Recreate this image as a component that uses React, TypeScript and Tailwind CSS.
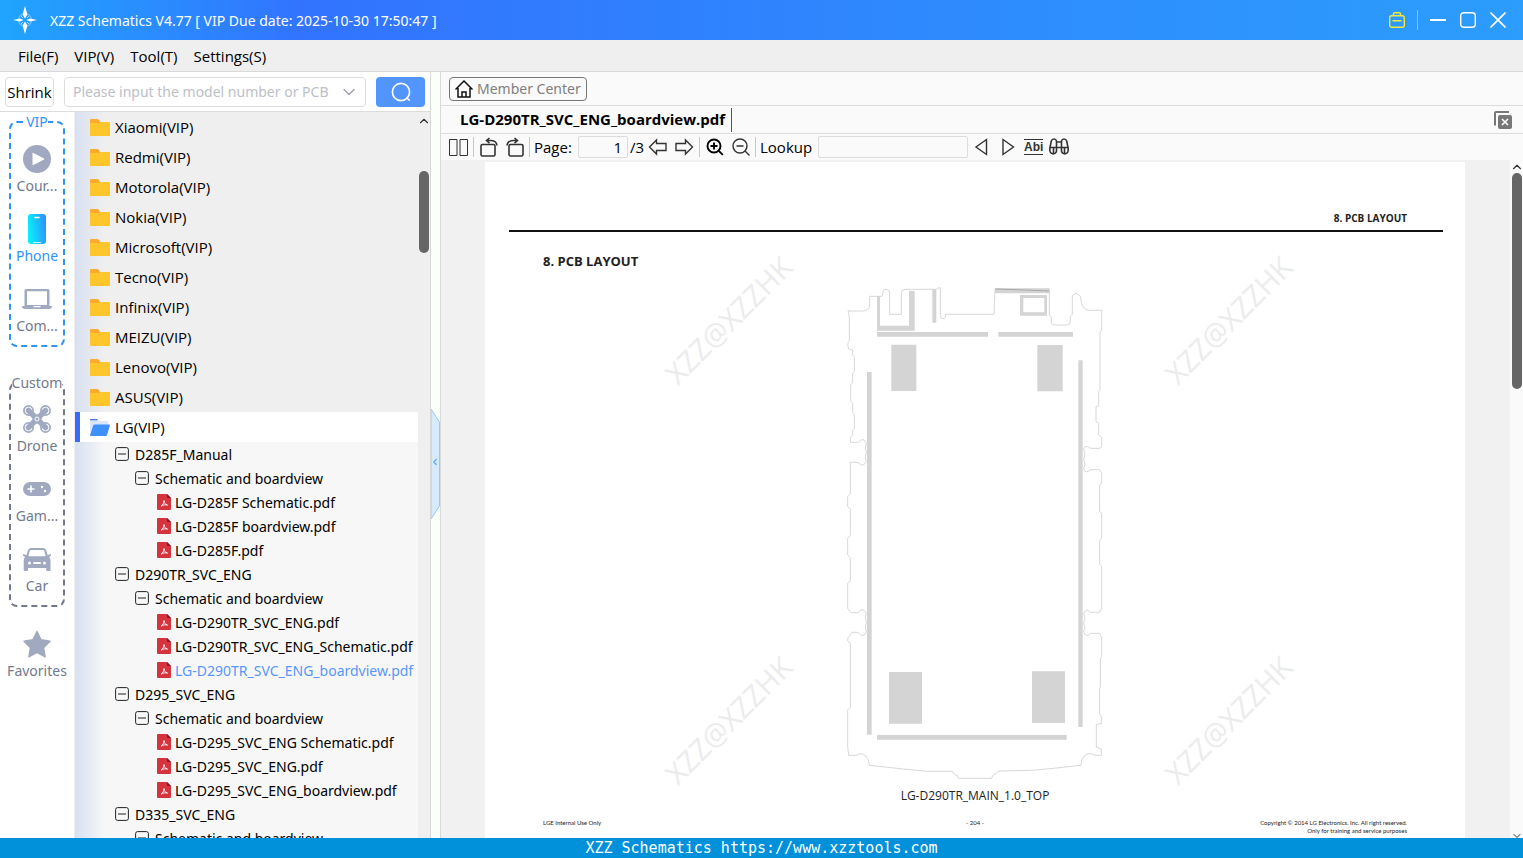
import type { ReactNode } from 'react';
import { ChevronDown, ChevronLeft, ChevronUp } from 'lucide-react';

type TreeNode = {
    label: string;
    level: 1 | 2 | 3;
    active?: boolean;
};

const brands = [
    'Xiaomi(VIP)',
    'Redmi(VIP)',
    'Motorola(VIP)',
    'Nokia(VIP)',
    'Microsoft(VIP)',
    'Tecno(VIP)',
    'Infinix(VIP)',
    'MEIZU(VIP)',
    'Lenovo(VIP)',
    'ASUS(VIP)',
];

const nodes: TreeNode[] = [
    { label: 'D285F_Manual', level: 1 },
    { label: 'Schematic and boardview', level: 2 },
    { label: 'LG-D285F Schematic.pdf', level: 3 },
    { label: 'LG-D285F boardview.pdf', level: 3 },
    { label: 'LG-D285F.pdf', level: 3 },
    { label: 'D290TR_SVC_ENG', level: 1 },
    { label: 'Schematic and boardview', level: 2 },
    { label: 'LG-D290TR_SVC_ENG.pdf', level: 3 },
    { label: 'LG-D290TR_SVC_ENG_Schematic.pdf', level: 3 },
    { label: 'LG-D290TR_SVC_ENG_boardview.pdf', level: 3, active: true },
    { label: 'D295_SVC_ENG', level: 1 },
    { label: 'Schematic and boardview', level: 2 },
    { label: 'LG-D295_SVC_ENG Schematic.pdf', level: 3 },
    { label: 'LG-D295_SVC_ENG.pdf', level: 3 },
    { label: 'LG-D295_SVC_ENG_boardview.pdf', level: 3 },
    { label: 'D335_SVC_ENG', level: 1 },
    { label: 'Schematic and boardview', level: 2 },
];

const indent = { 1: 'pl-10', 2: 'pl-[60px]', 3: 'pl-[82px]' };

/* ---------- icons ---------- */

function LogoIcon() {
    return (
        <svg className="w-6 h-7" viewBox="0 0 24 28" fill="none">
            <circle cx="12" cy="14" r="6.500" stroke="#fff" strokeOpacity=".35" strokeWidth="1.200" />
            <path d="M12 0l2.400 8.500L12 12.500 9.600 8.500zM12 28l2.400-8.500L12 15.500l-2.400 4zM0 14l7-1.600 3.500 1.600L7 15.600zM24 14l-7-1.600-3.500 1.600 3.500 1.600z" fill="#fff" />
            <path d="M8 10l2 2M16 10l-2 2M8 18l2-2M16 18l-2-2" stroke="#fff" strokeOpacity=".6" />
        </svg>
    );
}

function FolderIcon() {
    return (
        <svg className="w-5 h-[17px] shrink-0" viewBox="0 0 20 17">
            <path d="M0 1a1 1 0 011-1h7l2 2.500V8H0z" fill="#fcab2c" />
            <path d="M0 4h9.500l1-1H19a1 1 0 011 1v12a1 1 0 01-1 1H1a1 1 0 01-1-1z" fill="#fec62a" />
        </svg>
    );
}

function OpenFolderIcon() {
    return (
        <svg className="w-5 h-[17px] shrink-0" viewBox="0 0 20 17">
            <path d="M0 1a1 1 0 011-1h6l1 2h9a1 1 0 011 1v3L2 16H1a1 1 0 01-1-1z" fill="#dbe6fb" />
            <path d="M0 1a1 1 0 011-1h6l1 1.200H0z" fill="#3d72e8" />
            <path d="M4.500 5.500H19q1.200 0 .8 1.200L17 16q-.3 1-1.300 1H1Q-.2 17 .2 15.800L3.200 6.500q.3-1 1.300-1z" fill="#3d90fd" />
        </svg>
    );
}

function MinusBox() {
    return (
        <svg className="w-3.5 h-3.5 shrink-0" viewBox="0 0 14 14" fill="none" stroke="#222">
            <rect x=".6" y=".6" width="12.800" height="12.800" rx="2" />
            <path d="M3 7h8" />
        </svg>
    );
}

function PdfIcon() {
    return (
        <svg className="w-3.5 h-4 shrink-0" viewBox="0 0 14 16">
            <path d="M1 0h9l4 4v11a1 1 0 01-1 1H1a1 1 0 01-1-1V1a1 1 0 011-1z" fill="#d5343f" />
            <path d="M10 0l4 4h-3a1 1 0 01-1-1z" fill="#8f1620" />
            <path d="M4 12.200c1.600-.8 3-3.200 3-5.700 0 2.500 1.200 4 3.500 4.500-2.200-.5-4.300 0-6.500 1.200z" fill="none" stroke="#fff" strokeWidth=".9" strokeLinejoin="round" />
        </svg>
    );
}

function PlayIcon() {
    return (
        <svg className="w-7 h-7" viewBox="0 0 28 28">
            <circle cx="14" cy="14" r="14" fill="#a0a9bf" />
            <path d="M9.500 8.500q0-1 1-.5l10.500 5.400q1 .6 0 1.200L10.500 20q-1 .5-1-.5z" fill="#fff" />
        </svg>
    );
}

function PhoneIcon() {
    return (
        <svg className="w-[18px] h-[30px]" viewBox="0 0 18 30">
            <defs>
                <linearGradient id="phone-fill" x1="0" y1=".6" x2="1" y2=".4">
                    <stop offset="0" stopColor="#06f3fb" />
                    <stop offset="1" stopColor="#2f93ff" />
                </linearGradient>
            </defs>
            <rect width="18" height="30" rx="3" fill="url(#phone-fill)" />
            <path d="M7 3.500h4" stroke="#fff" strokeWidth="1.600" strokeLinecap="round" />
            <path d="M5 28.500h8" stroke="#fff" strokeWidth=".8" />
        </svg>
    );
}

function LaptopIcon() {
    return (
        <svg className="w-[30px] h-5" viewBox="0 0 30 20">
            <path d="M4 0h22a1.500 1.500 0 011.500 1.500V17h-25V1.500A1.500 1.500 0 014 0zM5 2.200V16h20V2.200z" fill="#a0a9bf" fillRule="evenodd" />
            <path d="M0 17h11l1 1.200h6l1-1.200h11q0 3-3 3H3q-3 0-3-3z" fill="#a0a9bf" />
        </svg>
    );
}

function DroneIcon() {
    return (
        <svg className="w-7 h-7" viewBox="0 0 28 28" fill="none" stroke="#a0a9bf">
            <circle cx="5.500" cy="5.500" r="4.600" strokeWidth="1.700" />
            <circle cx="22.500" cy="5.500" r="4.600" strokeWidth="1.700" />
            <circle cx="5.500" cy="22.500" r="4.600" strokeWidth="1.700" />
            <circle cx="22.500" cy="22.500" r="4.600" strokeWidth="1.700" />
            <path d="M5.500 5.500L11 11M22.500 5.500L17 11M5.500 22.500L11 17M22.500 22.500L17 17" strokeWidth="5.500" strokeLinecap="round" />
            <path d="M9.500 9q4.500 2 9 0-1 5 0 10-4.500-2-9 0 1-5 0-10z" fill="#a0a9bf" />
            <circle cx="14" cy="14" r="2" stroke="#fff" />
        </svg>
    );
}

function GameIcon() {
    return (
        <svg className="w-7 h-3.5" viewBox="0 0 28 14">
            <rect width="28" height="14" rx="7" fill="#a0a9bf" />
            <path d="M8 3.500v7M4.500 7h7" stroke="#fff" strokeWidth="1.600" />
            <circle cx="19" cy="5" r="1.200" fill="#fff" />
            <circle cx="22" cy="9" r="1.200" fill="#fff" />
        </svg>
    );
}

function CarIcon() {
    return (
        <svg className="w-7 h-[23px]" viewBox="0 0 28 23">
            <path d="M8 0h12q2.500 0 3.200 2.300l1.400 4.700L28 6v1.500l-2 1.800q1.500 1 1.500 3V22q0 1-1 1h-2.300q-1 0-1-1v-2H5v2q0 1-1 1H1.700q-1 0-1-1v-9.700q0-2 1.500-3L0 7.500V6l3.500 1L5 2.300Q5.600 0 8 0zM8 2q-1 0-1.300 1L5.300 8.300h17.400L21.300 3Q21 2 20 2z" fill="#a0a9bf" fillRule="evenodd" />
            <circle cx="6.500" cy="15" r="1.500" fill="#fff" />
            <circle cx="21.500" cy="15" r="1.500" fill="#fff" />
            <path d="M11 15h6" stroke="#fff" strokeWidth="2" strokeLinecap="round" />
        </svg>
    );
}

function StarIcon() {
    return (
        <svg className="w-7 h-7" viewBox="0 0 28 28">
            <path d="M14 1.500l4 8.300 9 1.400-6.500 6.400 1.600 9.200-8.100-4.400-8.100 4.400 1.600-9.200L1 11.200l9-1.400z" fill="#a0a9bf" stroke="#a0a9bf" strokeWidth="1.500" strokeLinejoin="round" />
        </svg>
    );
}

/* ---------- left side ---------- */

function RailItem({ icon, label, active }: { icon: ReactNode; label: string; active?: boolean }) {
    return (
        <button className={`flex w-full flex-col items-center whitespace-nowrap ${active ? 'text-[#2f93f6]' : 'text-[#717a8c]'}`}>
            <span className="flex h-8 items-center justify-center pt-0.5">{icon}</span>
            <span className="leading-6">{label}</span>
        </button>
    );
}

function Rail() {
    return (
        <nav className="flex w-[74px] shrink-0 flex-col bg-white font-['Noto_Sans',sans-serif] text-sm">
            <fieldset className="mx-[9px] flex min-w-0 flex-col gap-3.5 rounded-lg border-2 border-dashed border-[#2f93f6] pt-2.5 pb-[7px]">
                <legend className="mx-auto h-5 leading-5 text-[#2f93f6]">VIP</legend>
                <RailItem icon={<PlayIcon />} label="Cour..." />
                <RailItem icon={<PhoneIcon />} label="Phone" active />
                <RailItem icon={<LaptopIcon />} label="Com..." />
            </fieldset>
            <fieldset className="mx-[9px] mt-[26px] flex min-w-0 flex-col gap-3.5 rounded-lg border-2 border-dashed border-[#717a8c] pt-[9px] pb-[7px]">
                <legend className="mx-auto h-5 leading-5 text-[#717a8c]">Custom</legend>
                <RailItem icon={<DroneIcon />} label="Drone" />
                <RailItem icon={<GameIcon />} label="Gam..." />
                <RailItem icon={<CarIcon />} label="Car" />
            </fieldset>
            <div className="mt-5">
                <RailItem icon={<StarIcon />} label="Favorites" />
            </div>
        </nav>
    );
}

function Tree() {
    return (
        <div className="flex min-w-0 flex-1 overflow-hidden bg-[#efefef]">
            <ul className="ml-px min-w-0 flex-1 overflow-hidden bg-linear-to-r from-[#d8e0f1] to-[#efefef] to-[30px] text-black">
                {brands.map((brand) => (
                    <li key={brand} className="flex h-[30px] items-center gap-[5px] pl-[15px]">
                        <FolderIcon />
                        {brand}
                    </li>
                ))}
                <li className="flex h-[30px] items-center gap-[5px] border-l-[5px] border-[#376cfa] bg-white pl-2.5">
                    <OpenFolderIcon />
                    LG(VIP)
                </li>
                <li className="bg-linear-to-r from-[#d8e0f1] to-[#f7f7f7] to-[30px] font-['Noto_Sans',sans-serif] text-sm">
                    <ul>
                        {nodes.map((node, i) => (
                            <li
                                key={i}
                                className={`flex h-6 items-center whitespace-nowrap ${indent[node.level]} ${node.level === 3 ? 'gap-1' : 'gap-1.5'} ${node.active ? 'text-[#5797f9]' : ''}`}
                            >
                                {node.level === 3 ? <PdfIcon /> : <MinusBox />}
                                <span className="pt-0.5">{node.label}</span>
                            </li>
                        ))}
                    </ul>
                </li>
            </ul>
            <div className="flex w-3 shrink-0 flex-col items-center">
                <ChevronUp className="mt-0.5 h-3.5 w-3.5 text-[#333]" />
                <div className="mt-[43px] h-[82px] w-2.5 rounded-full bg-[#666]" />
            </div>
        </div>
    );
}

function Sidebar() {
    return (
        <aside className="flex w-[431px] shrink-0 flex-col border-r border-[#d9d9d9] bg-white">
            <div className="flex h-10 shrink-0 items-center border-b border-[#dcdcdc] px-[5px]">
                <button className="flex h-[30px] w-[49px] items-center justify-center rounded border border-[#dcdcdc] text-black">Shrink</button>
                <label className="ml-2.5 flex h-[30px] w-[302px] items-center rounded border border-[#dcdcdc]">
                    <input
                        aria-label="Model number"
                        placeholder="Please input the model number or PCB"
                        className="ml-2 w-[266px] pt-px font-['Noto_Sans',sans-serif] text-sm outline-none placeholder:text-[#bcc0c8]"
                    />
                    <ChevronDown className="h-5 w-5 text-[#9a9fa8]" strokeWidth={1.5} />
                </label>
                <button aria-label="Search" className="ml-2.5 flex h-[30px] w-[49px] items-center justify-center rounded bg-[#5295fd]">
                    <svg className="h-5 w-5" viewBox="0 0 20 20" fill="none" stroke="#fff" strokeWidth="1.600" strokeLinecap="round">
                        <circle cx="10" cy="10" r="8.600" />
                        <path d="M16 16l2.300 2.300" />
                    </svg>
                </button>
            </div>
            <div className="flex min-h-0 flex-1">
                <Rail />
                <Tree />
            </div>
        </aside>
    );
}

function Splitter() {
    return (
        <div className="flex w-[10px] shrink-0 items-center border-r border-[#d9d9d9] bg-[#fbfffa]">
            <button aria-label="Collapse sidebar" className="relative mt-[18px] h-[110px] w-[9px]">
                <svg className="h-full w-full" viewBox="0 0 9 110">
                    <path d="M0 0l8.500 13v84L0 110z" fill="#d7eafe" stroke="#96c9f7" />
                </svg>
                <ChevronLeft className="absolute top-[48px] -left-px h-2.5 w-2.5 text-[#5aaaf5]" strokeWidth={3} />
            </button>
        </div>
    );
}

/* ---------- viewer ---------- */

function Separator() {
    return <span className="h-5 w-px bg-[#c8c8c8]" />;
}

function IconButton({ label, children }: { label: string; children: ReactNode }) {
    return (
        <button aria-label={label} className="flex h-6 w-5 shrink-0 items-center justify-center text-[#333]">
            {children}
        </button>
    );
}

function Toolbar() {
    return (
        <div className="flex h-[26px] shrink-0 items-center bg-[#fafafa] pl-[7px] text-black">
            <IconButton label="Two pages">
                <svg className="h-5 w-5 shrink-0" viewBox="0 0 20 20" fill="none" stroke="currentColor">
                    <path d="M1.500 2.500h7.500v16h-7.500zM12 2.500h7.500v16h-7.500z" />
                </svg>
            </IconButton>
            <span className="mx-[5px] flex"><Separator /></span>
            <IconButton label="Rotate left">
                <svg className="h-5 w-5 shrink-0" viewBox="0 0 20 20" fill="none" stroke="currentColor" strokeWidth="1.600">
                    <rect x="2" y="7.500" width="14" height="11.500" rx="1.500" />
                    <path d="M10.500 1L7.500 3.500l3 2.700M7.500 3.500h4q6 0 6.500 5" />
                </svg>
            </IconButton>
            <span className="w-1.5" />
            <IconButton label="Rotate right">
                <svg className="h-5 w-5 shrink-0" viewBox="0 0 20 20" fill="none" stroke="currentColor" strokeWidth="1.600">
                    <rect x="4" y="7.500" width="14" height="11.500" rx="1.500" />
                    <path d="M9.500 1l3 2.500-3 2.700M12.500 3.500h-4q-6 0-6.500 5" />
                </svg>
            </IconButton>
            <span className="mx-1 flex"><Separator /></span>
            <label className="flex items-center">
                <span className="w-11">Page:</span>
                <input defaultValue="1" className="h-[22px] w-[50px] rounded-xs border border-[#dcdcdc] px-[5px] text-right" />
            </label>
            <span className="ml-0.5 w-[18px]">/3</span>
            <IconButton label="Previous page">
                <svg className="h-5 w-5 shrink-0" viewBox="0 0 20 20" fill="none" stroke="currentColor" strokeWidth="1.400">
                    <path d="M1.500 10L8.500 3v3.500h9.500v7H8.500V17z" />
                </svg>
            </IconButton>
            <span className="w-1.5" />
            <IconButton label="Next page">
                <svg className="h-5 w-5 shrink-0" viewBox="0 0 20 20" fill="none" stroke="currentColor" strokeWidth="1.400">
                    <path d="M18.500 10l-7-7v3.500H2v7h9.500V17z" />
                </svg>
            </IconButton>
            <span className="mx-[5px] flex"><Separator /></span>
            <IconButton label="Zoom in">
                <svg className="h-5 w-5 shrink-0 text-black" viewBox="0 0 20 20" fill="none" stroke="currentColor" strokeWidth="1.900">
                    <circle cx="9" cy="9" r="6.500" />
                    <path d="M13.800 13.800l4 4M5.500 9h7M9 5.500v7" />
                </svg>
            </IconButton>
            <span className="w-1.5" />
            <IconButton label="Zoom out">
                <svg className="h-5 w-5 shrink-0" viewBox="0 0 20 20" fill="none" stroke="currentColor" strokeWidth="1.400">
                    <circle cx="9" cy="9" r="7" />
                    <path d="M14 14l4.500 4.500M5.500 9h7" />
                </svg>
            </IconButton>
            <span className="mx-1 flex"><Separator /></span>
            <label className="flex items-center">
                <span className="w-[58px]">Lookup</span>
                <input className="h-[22px] w-[150px] rounded-xs border border-[#dcdcdc] px-1.5" />
            </label>
            <span className="w-1" />
            <IconButton label="Find previous">
                <svg className="h-5 w-5 shrink-0" viewBox="0 0 20 20" fill="none" stroke="currentColor" strokeWidth="1.400">
                    <path d="M14.500 2.500v15L4 10z" />
                </svg>
            </IconButton>
            <span className="w-1.5" />
            <IconButton label="Find next">
                <svg className="h-5 w-5 shrink-0" viewBox="0 0 20 20" fill="none" stroke="currentColor" strokeWidth="1.400">
                    <path d="M5 2.500v15L15.500 10z" />
                </svg>
            </IconButton>
            <button className="ml-1.5 h-4 border-y border-[#333] font-['Liberation_Sans',sans-serif] text-xs leading-3 font-bold text-[#333]">Abi</button>
            <span className="w-1.5" />
            <IconButton label="Search document">
                <svg className="h-5 w-5 shrink-0" viewBox="0 0 20 20" fill="none" stroke="currentColor" strokeWidth="1.600">
                    <path d="M.8 11.500L2.300 4Q3 2 5 2t2.500 2v9a3.300 3.300 0 01-6.600 1zM19.200 11.500L17.700 4Q17 2 15 2t-2.500 2v9a3.300 3.300 0 006.600 1zM1 10.500h18M7.500 5h5" />
                    <path d="M4.500 10.500v6M15.500 10.500v6" />
                </svg>
            </IconButton>
        </div>
    );
}

function BoardDrawing() {
    return (
        <svg className="h-[510px] w-[270px]" viewBox="0 0 810 1530" fill="none">
            <path
                d="M24 108H70Q89 106 89 88V64H125Q128 62 128 55Q128 43 138 43Q149 43 149 54V118H184V52Q184 43 195 43H290Q292 38 301 38V122Q301 131 309 131Q317 131 317 118H462L465 42 628 46V120L634 126V144Q635 150 645 150H680Q691 150 691 140V124L697 118V66Q697 58 708 55Q718 58 722 66Q724 106 748 106H785V165L780 172V345L776 350V392L768 396V440L776 445V480L785 487V512Q785 520 778 520H752Q736 508 731 522L735 537 731 552 735 567 731 582Q736 598 752 584H778L785 594V625L779 630V710L785 715V790L779 795V868L785 875V1000L778 1012H752Q738 998 731 1015L735 1030 731 1044 735 1058 731 1070Q738 1090 752 1075H778L785 1087V1145L781 1150V1235L779 1240V1318L785 1325V1345L769 1348V1417L784 1421V1441H765Q740 1425 725 1455L723 1471 640 1480 575 1486 482 1488Q470 1490 468 1495 455 1500 455 1510H356Q352 1508 352 1501 338 1499 338 1489H262L190 1482 88 1471 85 1455Q72 1426 48 1441H26L23 1415V1305L31 1297V1105L23 1097Q22 1086 31 1080L35 1072H54Q70 1092 79 1070L76 1056 79 1042 76 1028 79 1015Q68 994 55 1013H33L23 1000V925L31 918V848L23 840V790L31 782V702L23 695V665L31 657V562H54Q68 580 79 560L76 547 79 533 76 519 79 505Q70 484 55 502H31V487L38 480V465L43 460V418L38 412V385L32 378V330L38 322V295L43 290V245L38 240V225L26 222Q20 205 28 198V125Z"
                stroke="#cfcfcf"
                strokeWidth="2.500"
            />
            <path d="M111 64h9v88h87V48h17v119H111zM277 43h12v100h-12zM111 171h333v14H111zM475 171h224v14H475zM465 40h164v15H465zM540 60h81v62h-81zM550 69v43h63V69z" fill="#d4d4d4" fillRule="evenodd" />
            <path d="M466 42l90 3 72 3" stroke="#a8a8a8" strokeWidth="3" />
            <path d="M154 209h75v139h-75zM592 210h76v139h-76zM81 291h14v1088H81zM715 256h13v1100h-13zM147 1191h99v155h-99zM576 1189h99v155h-99zM111 1380h569v14H111z" fill="#d4d4d4" />
        </svg>
    );
}

function Watermark({ position }: { position: string }) {
    return (
        <span className={`pointer-events-none absolute flex h-0 w-0 items-center justify-center ${position}`}>
            <span className="-rotate-45 text-[29px] text-[#ececec]">XZZ@XZZHK</span>
        </span>
    );
}

function PdfPage() {
    return (
        <article className="relative mt-0.5 mr-[45px] ml-11 min-h-full bg-white text-[#222]">
            <Watermark position="left-[244px] top-[158px]" />
            <Watermark position="left-[744px] top-[158px]" />
            <Watermark position="left-[244px] top-[558px]" />
            <Watermark position="left-[744px] top-[558px]" />
            <header className="mr-[22px] ml-6 border-b-2 border-[#111] pt-12 pr-9 pb-1 text-right text-[10px] leading-4 font-bold">8. PCB LAYOUT</header>
            <h1 className="mt-[19px] ml-[58px] text-[13px] leading-5 font-bold">8. PCB LAYOUT</h1>
            <figure className="mt-1 flex flex-col items-center">
                <BoardDrawing />
                <figcaption className="mt-[3px] text-xs leading-4">LG-D290TR_MAIN_1.0_TOP</figcaption>
            </figure>
            <footer className="mt-[15px] grid grid-cols-3 px-[58px] font-['Lato',sans-serif] text-[6px] leading-2">
                <span>LGE Internal Use Only</span>
                <span className="text-center">- 204 -</span>
                <span className="text-right">
                    Copyright © 2014 LG Electronics. Inc. All right reserved.
                    <br />
                    Only for training and service purposes
                </span>
            </footer>
        </article>
    );
}

function Viewer() {
    return (
        <main className="flex min-w-0 flex-1 flex-col bg-[#fafafa]">
            <div className="flex h-[34px] shrink-0 items-center border-b border-[#dcdcdc] pl-2">
                <button className="flex h-6 items-center gap-1 rounded border border-[#777] px-[5px] font-['Noto_Sans',sans-serif] text-sm text-[#808080]">
                    <svg className="h-[18px] w-[18px]" viewBox="0 0 18 18" fill="none" stroke="#111" strokeWidth="1.500">
                        <path d="M.5 9.500L9 1l8.500 8.500M3 8v9h12V8M7 17v-5h4v5" />
                    </svg>
                    Member Center
                </button>
            </div>
            <div className="flex h-7 shrink-0 items-center justify-between border-b border-[#dcdcdc]">
                <span className="flex h-6 items-center border-r border-[#555] pr-1.5 pb-px pl-[19px] font-bold text-black">LG-D290TR_SVC_ENG_boardview.pdf</span>
                <button aria-label="Close all tabs" className="mr-[11px]">
                    <svg className="h-[18px] w-[18px]" viewBox="0 0 18 18" fill="none">
                        <path d="M1 14.500V2q0-1 1-1h13" stroke="#777" strokeWidth="2" />
                        <rect x="4" y="4" width="14" height="14" rx="2" fill="#777" />
                        <path d="M8 8l6 6M14 8l-6 6" stroke="#fff" strokeWidth="1.600" />
                    </svg>
                </button>
            </div>
            <Toolbar />
            <div className="flex min-h-0 flex-1">
                <div className="min-w-0 flex-1 overflow-hidden bg-[#f1f1f1]">
                    <PdfPage />
                </div>
                <div className="flex w-[13px] shrink-0 flex-col items-center">
                    <ChevronUp className="h-3.5 w-3.5 shrink-0 text-[#333]" />
                    <div className="-mt-px h-[216px] w-2.5 shrink-0 rounded-full bg-[#666]" />
                    <ChevronDown className="mt-auto -mb-1 h-3 w-3 shrink-0 text-[#333]" />
                </div>
            </div>
        </main>
    );
}

function TitleBar() {
    return (
        <header className="flex h-10 shrink-0 items-center bg-linear-to-r from-[#20a4fe] via-[#3273fe] via-20% to-[#2c9dfc] pr-[17px] pl-[13px] text-white">
            <LogoIcon />
            <span className="ml-[13px] pt-px font-['Noto_Sans',sans-serif] text-sm">XZZ Schematics V4.77 [ VIP Due date: 2025-10-30 17:50:47 ]</span>
            <div className="ml-auto flex items-center">
                <button aria-label="Toolbox">
                    <svg className="h-4 w-4" viewBox="0 0 16 16" fill="none" stroke="#f3e93c" strokeWidth="1.400">
                        <rect x=".7" y="3.700" width="14.600" height="11.600" rx="2" />
                        <path d="M4.500 3.500V2q0-1.300 1.300-1.300h4.400q1.300 0 1.300 1.300v1.500M3.500 8.800h9" />
                    </svg>
                </button>
                <span className="mx-3 h-5 w-px bg-white/40" />
                <button aria-label="Minimize">
                    <svg className="h-4 w-4" viewBox="0 0 16 16" stroke="#fff" strokeWidth="2"><path d="M0 8h16" /></svg>
                </button>
                <button aria-label="Maximize" className="ml-3.5">
                    <svg className="h-4 w-4" viewBox="0 0 16 16" fill="none" stroke="#fff" strokeWidth="1.400"><rect x=".7" y=".7" width="14.600" height="14.600" rx="3" /></svg>
                </button>
                <button aria-label="Close" className="ml-3.5">
                    <svg className="h-4 w-4" viewBox="0 0 16 16" stroke="#fff" strokeWidth="1.600"><path d="M.5.5l15 15M15.500.5l-15 15" /></svg>
                </button>
            </div>
        </header>
    );
}

export default function App() {
    return (
        <div className="flex h-screen flex-col overflow-hidden bg-white font-['Open_Sans','Noto_Sans',sans-serif] text-[15px] leading-5">
            <TitleBar />
            <nav className="flex h-8 shrink-0 items-center gap-4 border-b border-[#d9d9d9] bg-[#efefef] pl-[18px] text-black">
                <button>File(F)</button>
                <button>VIP(V)</button>
                <button>Tool(T)</button>
                <button>Settings(S)</button>
            </nav>
            <div className="flex min-h-0 flex-1">
                <Sidebar />
                <Splitter />
                <Viewer />
            </div>
            <footer className="h-5 shrink-0 bg-[#0091da] text-center font-['DejaVu_Sans_Mono',monospace] text-[15px] leading-5 text-white">
                XZZ Schematics https://www.xzztools.com
            </footer>
        </div>
    );
}
